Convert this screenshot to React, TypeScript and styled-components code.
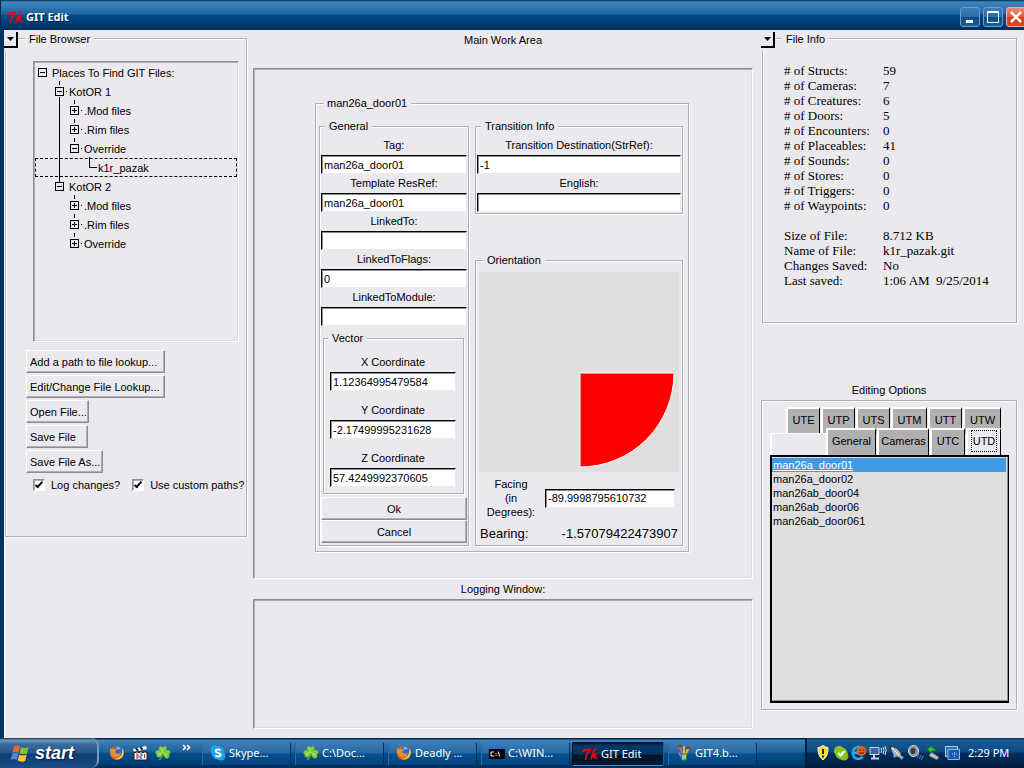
import React from "react";
import styled, { createGlobalStyle, css } from "styled-components";

const FACE = "#ebe9ed";
const LINE = "#b0aeb3";
const SHADE = "#8e8c91";
const UI_FONT = '"Liberation Sans", sans-serif';
const SHELL_FONT = '"Noto Sans", "Open Sans", sans-serif';

const GlobalStyle = createGlobalStyle`
  *, *::before, *::after { box-sizing: border-box; }
  body { margin: 0; background: ${FACE}; color: #000; font: 11px/16px ${UI_FONT}; }
  button, input { font: inherit; color: inherit; margin: 0; }
`;

const Desktop = styled.div`
  min-height: 100vh;
  display: flex;
  flex-direction: column;
  overflow: hidden;
`;

/* ---------- title bar ---------- */

const TitleBar = styled.header`
  height: 30px;
  display: flex;
  align-items: center;
  gap: 3px;
  padding: 3px 0 0 6px;
  overflow: hidden;
  border-left: 1px solid #02284a;
  background: linear-gradient(#02284a 0, #3e86c0 2px, #2f74b0 8px, #1f65a2 14px, #004c88 15px, #00407a 22px, #002c58 100%);
`;

const Title = styled.h1`
  flex: 1;
  margin: 0;
  color: #fff;
  font: bold 11px/16px ${SHELL_FONT};
  text-shadow: 1px 1px 0 #001c3c;
`;

const WindowButtons = styled.div`
  display: flex;
  gap: 3px;
  margin-right: -2px;
`;

const WindowButton = styled.button<{ $danger?: boolean }>`
  width: 20px;
  height: 20px;
  padding: 0;
  display: grid;
  place-items: center;
  border: 1px solid ${(p) => (p.$danger ? "#f0b0a0" : "#6a9fcc")};
  border-radius: 3px;
  background: ${(p) =>
    p.$danger
      ? "linear-gradient(#f08a70, #e25a38 50%, #d83c14 52%, #e04820)"
      : "linear-gradient(#3c80b8, #2a6ca8 50%, #0c4c88 52%, #1c5c98)"};
`;

/* ---------- window body ---------- */

const Body = styled.main`
  flex: 1;
  display: grid;
  grid-template-columns: 243px minmax(0, 1fr) 256px;
  border-left: 4px solid #013462;
  box-shadow: inset 1px 0 0 #fff;
  background: ${FACE};
  padding-right: 7px;
`;

const Column = styled.section`
  min-width: 0;
  display: flex;
  flex-direction: column;
`;

const CenterColumn = styled(Column)`
  padding: 0 8px 9px 6px;
`;

const SideColumn = styled(Column)`
  padding-bottom: 28px;
`;

const Caption = styled.h2<{ $tall?: boolean }>`
  margin: 0;
  font: inherit;
  text-align: center;
  line-height: 20px;
  height: ${(p) => (p.$tall ? "38px" : "20px")};
`;

const EditingCaption = styled(Caption)`
  margin-top: 57px;
`;

const Group = styled.fieldset`
  min-width: 0;
  margin: 0;
  padding: 0;
  border: 1px solid ${LINE};
  box-shadow: 1px 1px 0 #fff, inset 1px 1px 0 #fff;
`;

const Legend = styled.legend`
  margin-left: 4px;
  padding: 0 4px;
  line-height: 16px;
  background: ${FACE};
`;

const PanelLegend = styled(Legend)`
  margin-left: 19px;
  padding-top: 3px;
  line-height: 13px;
`;

const PanelGroup = styled(Group)`
  position: relative;
  margin-left: 1px;
`;

const CollapseButton = styled.button`
  position: absolute;
  left: -2px;
  top: -14px;
  width: 14px;
  height: 16px;
  padding: 0;
  display: grid;
  place-items: center;
  background: ${FACE};
  border: solid #000;
  border-width: 0 2px 2px 0;
  box-shadow: 0 3px 0 ${FACE};
`;

const sunken = css`
  border: 1px solid;
  border-color: ${SHADE} #fff #fff ${SHADE};
  box-shadow: inset 1px 1px 0 ${LINE}, inset -1px -1px 0 #dedce2;
`;

/* ---------- file browser ---------- */

const BrowserGroup = styled(PanelGroup)`
  height: 507px;
`;

const TreeBox = styled.div`
  ${sunken}
  height: 281px;
  margin: 15px 7px 0 27px;
  padding: 1px;
`;

const TreeList = styled.ul`
  list-style: none;
  margin: 0;
  padding: 0;
`;

const TreeItem = styled.li<{ $trunk?: boolean }>`
  position: relative;
  ${(p) =>
    p.$trunk &&
    css`
      &::after {
        content: "";
        position: absolute;
        left: 24px;
        top: 15px;
        bottom: -5px;
        width: 1px;
        background: #000;
      }
    `}
`;

const TreeRow = styled.div<{ $depth: number; $selected?: boolean }>`
  height: 19px;
  display: flex;
  align-items: center;
  gap: 5px;
  padding-left: ${(p) => [3, 20, 35, 53][p.$depth]}px;
  outline: ${(p) => (p.$selected ? "1px dashed #000" : "none")};
  outline-offset: -1px;
`;

const Toggle = styled.button<{ $open?: boolean; $stem?: boolean }>`
  position: relative;
  width: 9px;
  height: 9px;
  padding: 0;
  border: 1px solid #000;
  background: linear-gradient(#000, #000) center / 5px 1px no-repeat,
    ${(p) => (p.$open ? "none" : "linear-gradient(#000, #000) center / 1px 5px no-repeat")};
  &::before {
    content: "";
    display: ${(p) => (p.$stem ? "block" : "none")};
    position: absolute;
    left: 3px;
    top: -7px;
    width: 1px;
    height: 4px;
    background: #000;
  }
  &::after {
    content: "";
    position: absolute;
    left: 10px;
    top: 3px;
    width: 1px;
    height: 1px;
    background: ${(p) => (p.$stem ? "#000" : "none")};
  }
`;

const Elbow = styled.span`
  width: 8px;
  height: 11px;
  margin: -10px -4px 0 1px;
  border: solid #000;
  border-width: 0 0 1px 1px;
`;

const ButtonStack = styled.div`
  display: flex;
  flex-direction: column;
  align-items: flex-start;
  gap: 2px;
  margin: 8px 0 0 20px;
`;

const PushButton = styled.button<{ $w?: number; $center?: boolean }>`
  width: ${(p) => (p.$w ? p.$w + "px" : "100%")};
  height: 23px;
  padding: 0 3px;
  text-align: ${(p) => (p.$center ? "center" : "left")};
  white-space: nowrap;
  background: ${FACE};
  border: 1px solid;
  border-color: #fff ${SHADE} ${SHADE} #fff;
  box-shadow: inset -1px -1px 0 ${LINE};
`;

const CheckRow = styled.div`
  display: flex;
  gap: 12px;
  margin: 4px 0 0 27px;
`;

const CheckLabel = styled.label`
  display: flex;
  align-items: center;
  gap: 6px;
  white-space: nowrap;
`;

const Check = styled.input`
  appearance: none;
  width: 12px;
  height: 12px;
  background: #fff;
  border: 1px solid;
  border-color: ${SHADE} #fff #fff ${SHADE};
  box-shadow: inset 1px 1px 0 ${LINE};
  display: grid;
  place-items: center;
  &:checked::before {
    content: "";
    width: 4px;
    height: 8px;
    margin-top: -2px;
    border: solid #000;
    border-width: 0 2px 2px 0;
    transform: rotate(42deg);
  }
`;

/* ---------- work area ---------- */

const WorkBox = styled.div`
  ${sunken}
  flex: 1;
  padding: 26px 2px 26px 0;
`;

const LogBox = styled.div`
  ${sunken}
  height: 130px;
`;

const DoorGroup = styled(Group)`
  width: 374px;
  margin: 0 auto;
  padding: 7px 5px 5px 3px;
`;

const DoorColumns = styled.div`
  display: grid;
  grid-template-columns: 150px 208px;
  justify-content: space-between;
`;

const Stack = styled.div`
  display: flex;
  flex-direction: column;
  gap: 38px;
`;

const FieldGroup = styled(Group)`
  padding: 2px 1px 1px;
`;

const Field = styled.label`
  display: block;
  text-align: center;
`;

const FieldName = styled.span`
  display: block;
  line-height: 19px;
`;

const TextInput = styled.input`
  display: block;
  width: 100%;
  height: 19px;
  padding: 0 2px;
  background: #fff;
  border: 1px solid;
  border-color: #000 ${FACE} ${FACE} #000;
  box-shadow: inset 1px 1px 0 ${SHADE};
  border-radius: 0;
`;

const VectorGroup = styled(Group)`
  margin: 4px 3px 3px 2px;
  padding: 7px 0 6px;
`;

const VectorFields = styled.div`
  display: grid;
  gap: 10px;
  padding: 0 7px 0 6px;
`;

const OrientationGroup = styled(Group)`
  padding: 4px 3px 3px;
`;

const Dial = styled.svg`
  display: block;
  width: 200px;
  height: 200px;
  background: #dfdfdf;
`;

const FacingRow = styled.label`
  display: grid;
  grid-template-columns: 58px 130px;
  column-gap: 8px;
  align-items: center;
  margin-top: 5px;
`;

const FacingName = styled.span`
  line-height: 14px;
  text-align: center;
  padding-left: 6px;
`;

const BearingRow = styled.div`
  display: flex;
  justify-content: space-between;
  padding: 6px 1px 0;
  font-size: 13px;
  line-height: 17px;
`;

/* ---------- file info ---------- */

const InfoGroup = styled(PanelGroup)`
  height: 293px;
`;

const InfoTable = styled.table`
  margin: 17px 0 0 21px;
  border-collapse: collapse;
  font: 13px/15px "Liberation Serif", serif;
  th, td { padding: 0; height: 15px; font-weight: normal; text-align: left; white-space: pre; }
  th { width: 99px; }
`;

/* ---------- editing options ---------- */

const OptionsFrame = styled.div`
  flex: 1;
  display: flex;
  flex-direction: column;
  padding: 6px 7px 6px 8px;
  border: 1px solid ${LINE};
  box-shadow: 1px 1px 0 #fff, inset 1px 1px 0 #fff;
`;

const TabRow = styled.div<{ $front?: boolean }>`
  display: flex;
  justify-content: flex-end;
  gap: 1px;
  padding-right: 8px;
  ${(p) =>
    p.$front &&
    css`
      margin-top: -6px;
      background: linear-gradient(#fff, #fff) 0 5px / 56px 1px no-repeat,
        linear-gradient(#fff, #fff) 0 5px / 2px 100% no-repeat,
        linear-gradient(${FACE}, ${FACE}) 0 6px / 56px 100% no-repeat;
    `}
`;

const Tab = styled.button<{ $w: number; $active?: boolean }>`
  width: ${(p) => p.$w}px;
  height: 27px;
  padding: 0 0 3px;
  text-align: center;
  background: ${(p) => (p.$active ? FACE : "#b0b0b0")};
  border: solid;
  border-width: 2px 1px 0 2px;
  border-color: #fff #000 #fff #fff;
  span { padding: 4px 1px; outline: ${(p) => (p.$active ? "1px dotted #000" : "none")}; }
`;

const DoorList = styled.ul`
  flex: 1;
  margin: 0;
  padding: 1px 0;
  list-style: none;
  background: #dfdfdf;
  border: solid #000;
  border-width: 2px 1px 2px 2px;
  box-shadow: inset -1px -1px 0 ${SHADE};
`;

const DoorItem = styled.li<{ $selected?: boolean }>`
  line-height: 14px;
  margin-right: 2px;
  padding-left: 1px;
  background: ${(p) => (p.$selected ? "#3f9be8" : "transparent")};
  color: ${(p) => (p.$selected ? "#fff" : "#000")};
  text-decoration: ${(p) => (p.$selected ? "underline" : "none")};
`;

/* ---------- taskbar ---------- */

const Taskbar = styled.footer`
  height: 30px;
  display: flex;
  align-items: stretch;
  color: #fff;
  font: 11px/16px ${SHELL_FONT};
  background: linear-gradient(#01284c 0, #01284c 1px, #4184ba 2px, #2c70aa 8px, #1e629c 14px, #02508c 15px, #003e74 26px, #002a54 100%);
`;

const StartButton = styled.button`
  width: 99px;
  padding: 0 0 0 10px;
  display: flex;
  align-items: center;
  gap: 5px;
  border: 0;
  border-right: 2px solid #6c9cc4;
  border-radius: 0 8px 8px 0;
  background: linear-gradient(#01284c 0, #6d9ac0 2px, #3c6c9c 6px, #24548a 15px, #103c70 16px, #1a4c84 100%);
  color: #fff;
  font: italic bold 18px/20px "Liberation Sans", sans-serif;
  text-shadow: 1px 1px 2px #001a34;
`;

const QuickLaunch = styled.nav`
  width: 103px;
  display: flex;
  align-items: center;
  gap: 7px;
  padding-left: 10px;
`;

const IconButton = styled.button`
  padding: 0;
  border: 0;
  background: none;
  display: flex;
`;

const Chevron = styled(IconButton)`
  align-self: flex-start;
  margin: 6px 0 0 4px;
`;

const Tasks = styled.div`
  flex: 1;
  min-width: 0;
  display: flex;
  gap: 4px;
  padding: 4px 0 2px;
`;

const TaskButton = styled.button<{ $active?: boolean }>`
  width: ${(p) => (p.$active ? 92 : 89)}px;
  margin-left: ${(p) => (p.$active ? -2 : 0)}px;
  display: flex;
  align-items: center;
  gap: 3px;
  padding: ${(p) => (p.$active ? "0 0 0 9px" : "0 0 2px 7px")};
  white-space: nowrap;
  border: 1px solid;
  border-radius: 2px;
  border-color: ${(p) => (p.$active ? "#000c1c #1c5c94 #4c8cbc #000c1c" : "#3c7cb4 #013060 #012c58 #2c6ca4")};
  background: ${(p) =>
    p.$active
      ? "linear-gradient(#021830, #02386a 3px, #023460 11px, #001428 12px, #001c38)"
      : "linear-gradient(#3a7cb6, #2468a4 10px, #06508e 11px, #014480)"};
`;

const Tray = styled.div`
  width: 219px;
  display: flex;
  align-items: center;
  gap: 2px;
  padding-left: 8px;
  border-left: 2px solid #001c3c;
  background: linear-gradient(#01284c 0, #1c5c94 2px, #0a4a84 14px, #00305c 15px, #001c3c 100%);
`;

const Clock = styled.time`
  margin-left: 5px;
  white-space: nowrap;
`;

/* ---------- drawings ---------- */

const TkLogo = () => (
  <svg width="16" height="16" viewBox="0 0 16 16" fill="none" stroke="#f00" strokeLinecap="round" strokeLinejoin="round">
    <path d="M1 5.500C2 3 4 4.500 8 3.500C6 6 4 9 3.500 13" strokeWidth="2" />
    <path d="M13.500 2.500C11.500 5 10 9 9 13M10 9.500C12 8.500 14 7 14 8.500C14 9.500 12.500 10 11 10.200C12 11 12 13 15 11.500" strokeWidth="1.500" />
  </svg>
);

const WindowsFlag = () => (
  <svg width="20" height="19" viewBox="0 0 20 19">
    <path d="M4 2.500Q7 .5 10 2.500L8.500 9Q5.500 7 2.500 9Z" fill="#f0622c" />
    <path d="M11 3Q14.500 5 18.500 3L17 9.500Q13.500 11 9.500 9.500Z" fill="#7cc242" />
    <path d="M2.200 10Q5.500 8 8.200 10L6.700 16Q4 14 .8 16Z" fill="#4c8ce8" />
    <path d="M9.200 10.500Q13 12.500 16.700 10.500L15.200 17Q11.500 18.500 7.700 16.500Z" fill="#fcc82c" />
  </svg>
);

const Firefox = () => (
  <svg width="16" height="16" viewBox="0 0 16 16">
    <circle cx="8" cy="8" r="7" fill="#e8681c" />
    <circle cx="9" cy="6.500" r="5" fill="#2c6cc4" />
    <path d="M7 2.500Q10 1 12 4Q9 4 8 5Z" fill="#78b8ec" />
    <path d="M1 3L3.500 4.500Q6 3.500 7.500 5L6 7Q8 10 12 8Q11 12 7 12Q2 12 1 7Z" fill="#f09028" />
    <path d="M13.500 3Q16 8 13 12Q10 15 6 14Q12 13 13 8Z" fill="#fcd048" />
  </svg>
);

const Clapper = () => (
  <svg width="16" height="16" viewBox="0 0 16 16">
    <path d="M1 4L14 1L15 4L2 7Z" fill="#fff" />
    <path d="M3 3.500L5 3L7 5.500L5 6ZM7.500 2.500L9.500 2L11.500 4.500L9.500 5Z" fill="#111" />
    <path d="M2 7H15V15H2Z" fill="#f4f4f4" stroke="#222" />
    <path d="M4 9h2v4h-2M4 11h2" stroke="#d03020" fill="none" />
    <path d="M8 9h2v2h-2v2h2" stroke="#2060c0" fill="none" />
    <path d="M12.500 9v4" stroke="#d03020" />
    <path d="M2 7.500h13" stroke="#222" strokeDasharray="2 2" />
  </svg>
);

const Clover = () => (
  <svg width="16" height="16" viewBox="0 0 16 16">
    <path d="M8 8Q7 13 4 15" stroke="#4ca038" strokeWidth="1.500" fill="none" />
    <g fill="#84d04c" stroke="#58a838" strokeWidth=".5">
      <path d="M8 7.500Q3 6 4 2.500Q5.500 0 7.500 2.500Q10 0 11.500 2.500Q12 6 8 7.500Z" />
      <path d="M8 7.500Q4 3.500 1 6Q-.5 8 1.500 9Q1 12 4 12.500Q7 12 8 7.500Z" />
      <path d="M8 7.500Q12 3.500 15 6Q16 8 14 9.500Q15 13 12 13.500Q8.500 13 8 7.500Z" />
    </g>
    <path d="M8 7.500L6 3M8 7.500L3 9M8 7.500L12 10" stroke="#b4e87c" fill="none" />
  </svg>
);

const Skype = () => (
  <svg width="16" height="16" viewBox="0 0 16 16">
    <circle cx="5" cy="5" r="4.500" fill="#18a8e8" />
    <circle cx="11" cy="11" r="4.500" fill="#18a8e8" />
    <circle cx="8" cy="8" r="6.500" fill="#18a8e8" />
    <path d="M10.500 5.500Q8 3.500 6 5Q5 7 8 7.800Q11.500 8.500 10.500 10.500Q8 12.500 5.300 10.300" stroke="#fff" strokeWidth="1.800" fill="none" />
  </svg>
);

const Console = () => (
  <svg width="16" height="16" viewBox="0 0 16 16">
    <path d="M0 2h16v12h-16z" fill="#000" />
    <path d="M0 2h16v2h-16z" fill="#2c6cd8" />
    <path d="M5 7h-3v4h3M7 8v1M7 10v1M9 6.500L11 11.500" stroke="#fff" fill="none" />
  </svg>
);

const Brushes = () => (
  <svg width="16" height="16" viewBox="0 0 16 16" fill="none" strokeLinecap="round">
    <path d="M4 2L7 11" stroke="#e8682c" strokeWidth="2" />
    <path d="M8 2V11" stroke="#d8b878" strokeWidth="2" />
    <path d="M12 4L9 11" stroke="#e8b030" strokeWidth="2" />
    <path d="M3 8L6 13" stroke="#4c8ce0" strokeWidth="2" />
    <path d="M6 9h5l-1 6h-4z" fill="#9cc8a0" stroke="#3c7c4c" />
    <path d="M3 1h2M11 3h2" stroke="#983820" strokeWidth="2" />
  </svg>
);

const TrayIcons = () => (
  <>
    <svg width="16" height="16" viewBox="0 0 16 16">
      <path d="M8 .5Q11 2.500 13 2.500Q13.500 11 8 15Q2.500 11 3 2.500Q5 2.500 8 .5Z" fill="#fcdc20" stroke="#e8f0f8" />
      <path d="M8 4v5M8 10.500v2" stroke="#222" strokeWidth="2" />
    </svg>
    <svg width="16" height="16" viewBox="0 0 16 16">
      <circle cx="6" cy="6" r="5" fill="#8cc820" />
      <circle cx="11" cy="11" r="4.500" fill="#7cb818" />
      <circle cx="8.500" cy="8.500" r="6" fill="#84c41c" />
      <path d="M5 8L7.500 10.500L11.500 6" stroke="#fff" strokeWidth="2" fill="none" />
    </svg>
    <svg width="16" height="16" viewBox="0 0 16 16">
      <path d="M12 12Q7 16 3 12Q0 7 4 3Q7 1 9 2M3 8h10" stroke="#28a8e8" strokeWidth="2.500" fill="none" />
      <circle cx="10.500" cy="6" r="5" fill="#d8681c" />
      <path d="M8 5h2M11.500 5h2M8 8h5" stroke="#4c1c04" />
    </svg>
    <svg width="18" height="16" viewBox="0 0 18 16" fill="none">
      <path d="M1 2.500h9v7h-9z" fill="#3c64a8" stroke="#c8d4e8" />
      <path d="M5 10v3M2 13.500h8" stroke="#c8d4e8" strokeWidth="2" />
      <path d="M12 3Q13 5.500 12 8M14 2Q16 5.500 14 9M16 1Q18.500 5.500 16 10" stroke="#dce8f4" />
    </svg>
    <svg width="16" height="16" viewBox="0 0 16 16">
      <path d="M1 1Q9 2 12 8L13 14L8 12Q2 9 1 1Z" fill="#aab4bc" stroke="#20282c" />
      <path d="M10 10L15 12L12 15ZM4 8L5 13L8 11Z" fill="#8cb0d8" />
      <path d="M3 3L10 10" stroke="#f4f4f4" />
    </svg>
    <svg width="17" height="16" viewBox="0 0 17 16" fill="none">
      <ellipse cx="6.500" cy="6" rx="5" ry="5.500" fill="#90949c" stroke="#dcdce0" />
      <ellipse cx="6" cy="6" rx="2.500" ry="3" fill="#34383c" />
      <path d="M10 13L12 9M12 14L14.500 10M14 15L16.500 11" stroke="#4c80d8" />
    </svg>
    <svg width="16" height="16" viewBox="0 0 16 16">
      <path d="M5 7L13 12L11 15L3 11Z" fill="#c0c4c8" stroke="#50585c" />
      <path d="M1 4L6 1V3Q10 3 10 7Q8 5 6 5.500V8Z" fill="#3cc43c" stroke="#148014" />
    </svg>
    <svg width="17" height="16" viewBox="0 0 17 16" fill="none">
      <path d="M1.500 1.500h12v10h-12z" fill="#2c6cb8" stroke="#b0d0f0" />
      <path d="M4 4.500h11.500v10h-11.500z" fill="#1c58a8" stroke="#8cb8e8" />
      <path d="M8 9h5M10.500 7v5" stroke="#9cd0f8" strokeDasharray="1 1" />
    </svg>
  </>
);

const DownArrow = () => (
  <svg width="7" height="4" viewBox="0 0 7 4">
    <path d="M0 0h7L3.500 4z" fill="#000" />
  </svg>
);

/* ---------- data ---------- */

const stats: [string, string][] = [
  ["# of Structs:", "59"],
  ["# of Cameras:", "7"],
  ["# of Creatures:", "6"],
  ["# of Doors:", "5"],
  ["# of Encounters:", "0"],
  ["# of Placeables:", "41"],
  ["# of Sounds:", "0"],
  ["# of Stores:", "0"],
  ["# of Triggers:", "0"],
  ["# of Waypoints:", "0"],
  ["", ""],
  ["Size of File:", "8.712 KB"],
  ["Name of File:", "k1r_pazak.git"],
  ["Changes Saved:", "No"],
  ["Last saved:", "1:06 AM  9/25/2014"],
];

const generalFields: [string, string][] = [
  ["Tag:", "man26a_door01"],
  ["Template ResRef:", "man26a_door01"],
  ["LinkedTo:", ""],
  ["LinkedToFlags:", "0"],
  ["LinkedToModule:", ""],
];

const vector: [string, string][] = [
  ["X Coordinate", "1.12364995479584"],
  ["Y Coordinate", "-2.17499995231628"],
  ["Z Coordinate", "57.4249992370605"],
];

const doors = ["man26a_door01", "man26a_door02", "man26ab_door04", "man26ab_door06", "man26ab_door061"];

const backTabs: [string, number][] = [["UTE", 34], ["UTP", 34], ["UTS", 34], ["UTM", 36], ["UTT", 34], ["UTW", 38]];
const frontTabs: [string, number][] = [["General", 50], ["Cameras", 52], ["UTC", 35], ["UTD", 35]];

const LabeledInput = ({ name, value }: { name: string; value: string }) => (
  <Field>
    <FieldName>{name}</FieldName>
    <TextInput type="text" defaultValue={value} />
  </Field>
);

const Folder = ({ name, override }: { name: string; override?: string }) => (
  <TreeItem $trunk={!!override}>
    <TreeRow $depth={1}>
      <Toggle $open $stem={!!override} aria-label={`Collapse ${name}`} />
      {name}
    </TreeRow>
    <TreeList>
      {[".Mod files", ".Rim files", "Override"].map((child) => (
        <TreeItem key={child}>
          <TreeRow $depth={2}>
            <Toggle $stem $open={child === "Override" && !!override} aria-label={`Toggle ${child}`} />
            {child}
          </TreeRow>
        </TreeItem>
      ))}
      {override && (
        <TreeItem>
          <TreeRow $depth={3} $selected>
            <Elbow />
            {override}
          </TreeRow>
        </TreeItem>
      )}
    </TreeList>
  </TreeItem>
);

export default function App() {
  return (
    <Desktop>
      <GlobalStyle />
      <TitleBar>
        <TkLogo />
        <Title>GIT Edit</Title>
        <WindowButtons>
          <WindowButton aria-label="Minimize">
            <svg width="14" height="14"><path d="M3 10h7v3H3z" fill="#fff" /></svg>
          </WindowButton>
          <WindowButton aria-label="Maximize">
            <svg width="14" height="14" fill="none" stroke="#fff"><path d="M1.500 1.500h11v11h-11zM1 2.500h12" /></svg>
          </WindowButton>
          <WindowButton $danger aria-label="Close">
            <svg width="14" height="14"><path d="M2 2L12 12M12 2L2 12" stroke="#fff" strokeWidth="2.500" /></svg>
          </WindowButton>
        </WindowButtons>
      </TitleBar>

      <Body>
        <Column>
          <BrowserGroup>
            <PanelLegend>File Browser</PanelLegend>
            <CollapseButton aria-label="Collapse File Browser"><DownArrow /></CollapseButton>
            <TreeBox>
              <TreeList>
                <TreeItem>
                  <TreeRow $depth={0}>
                    <Toggle $open aria-label="Collapse all" />
                    Places To Find GIT Files:
                  </TreeRow>
                  <TreeList>
                    <Folder name="KotOR 1" override="k1r_pazak" />
                    <Folder name="KotOR 2" />
                  </TreeList>
                </TreeItem>
              </TreeList>
            </TreeBox>
            <ButtonStack>
              <PushButton $w={139}>Add a path to file lookup...</PushButton>
              <PushButton $w={139}>Edit/Change File Lookup...</PushButton>
              <PushButton $w={63}>Open File...</PushButton>
              <PushButton $w={62}>Save File</PushButton>
              <PushButton $w={77}>Save File As...</PushButton>
            </ButtonStack>
            <CheckRow>
              <CheckLabel><Check type="checkbox" defaultChecked />Log changes?</CheckLabel>
              <CheckLabel><Check type="checkbox" defaultChecked />Use custom paths?</CheckLabel>
            </CheckRow>
          </BrowserGroup>
        </Column>

        <CenterColumn>
          <Caption $tall>Main Work Area</Caption>
          <WorkBox>
            <DoorGroup>
              <Legend>man26a_door01</Legend>
              <DoorColumns>
                <FieldGroup>
                  <Legend>General</Legend>
                  {generalFields.map(([name, value]) => (
                    <LabeledInput key={name} name={name} value={value} />
                  ))}
                  <VectorGroup>
                    <Legend>Vector</Legend>
                    <VectorFields>
                      {vector.map(([name, value]) => (
                        <LabeledInput key={name} name={name} value={value} />
                      ))}
                    </VectorFields>
                  </VectorGroup>
                  <PushButton $center>Ok</PushButton>
                  <PushButton $center>Cancel</PushButton>
                </FieldGroup>
                <Stack>
                  <FieldGroup>
                    <Legend>Transition Info</Legend>
                    <LabeledInput name="Transition Destination(StrRef):" value="-1" />
                    <LabeledInput name="English:" value="" />
                  </FieldGroup>
                  <OrientationGroup>
                    <Legend>Orientation</Legend>
                    <Dial viewBox="0 0 200 200" role="img" aria-label="Door orientation">
                      <path d="M101 101H195A94 94 0 0 1 101 195Z" fill="#f00" stroke="#fff" />
                    </Dial>
                    <FacingRow>
                      <FacingName>Facing<br />(in<br />Degrees):</FacingName>
                      <TextInput type="text" defaultValue="-89.9998795610732" />
                    </FacingRow>
                    <BearingRow>
                      <span>Bearing:</span>
                      <span>-1.57079422473907</span>
                    </BearingRow>
                  </OrientationGroup>
                </Stack>
              </DoorColumns>
            </DoorGroup>
          </WorkBox>
          <Caption>Logging Window:</Caption>
          <LogBox />
        </CenterColumn>

        <SideColumn>
          <InfoGroup>
            <PanelLegend>File Info</PanelLegend>
            <CollapseButton aria-label="Collapse File Info"><DownArrow /></CollapseButton>
            <InfoTable>
              <tbody>
                {stats.map(([name, value], i) => (
                  <tr key={i}>
                    <th scope="row">{name}</th>
                    <td>{value}</td>
                  </tr>
                ))}
              </tbody>
            </InfoTable>
          </InfoGroup>
          <EditingCaption>Editing Options</EditingCaption>
          <OptionsFrame>
            <TabRow role="tablist">
              {backTabs.map(([name, w]) => (
                <Tab key={name} $w={w} role="tab"><span>{name}</span></Tab>
              ))}
            </TabRow>
            <TabRow role="tablist" $front>
              {frontTabs.map(([name, w]) => (
                <Tab key={name} $w={w} $active={name === "UTD"} role="tab" aria-selected={name === "UTD"}>
                  <span>{name}</span>
                </Tab>
              ))}
            </TabRow>
            <DoorList role="listbox" aria-label="Doors">
              {doors.map((door, i) => (
                <DoorItem key={door} role="option" aria-selected={i === 0} $selected={i === 0}>{door}</DoorItem>
              ))}
            </DoorList>
          </OptionsFrame>
        </SideColumn>
      </Body>

      <Taskbar>
        <StartButton><WindowsFlag />start</StartButton>
        <QuickLaunch>
          <IconButton aria-label="Firefox"><Firefox /></IconButton>
          <IconButton aria-label="Media Player Classic"><Clapper /></IconButton>
          <IconButton aria-label="Clover"><Clover /></IconButton>
          <Chevron aria-label="More">
            <svg width="9" height="7" fill="none" stroke="#fff" strokeWidth="1.500"><path d="M1 1L3.500 3.500L1 6M5 1L7.500 3.500L5 6" /></svg>
          </Chevron>
        </QuickLaunch>
        <Tasks>
          <TaskButton><Skype />Skype...</TaskButton>
          <TaskButton><Clover />C:\Doc...</TaskButton>
          <TaskButton><Firefox />Deadly ...</TaskButton>
          <TaskButton><Console />C:\WIN...</TaskButton>
          <TaskButton $active><TkLogo />GIT Edit</TaskButton>
          <TaskButton><Brushes />GIT4.b...</TaskButton>
        </Tasks>
        <Tray>
          <TrayIcons />
          <Clock>2:29 PM</Clock>
        </Tray>
      </Taskbar>
    </Desktop>
  );
}
